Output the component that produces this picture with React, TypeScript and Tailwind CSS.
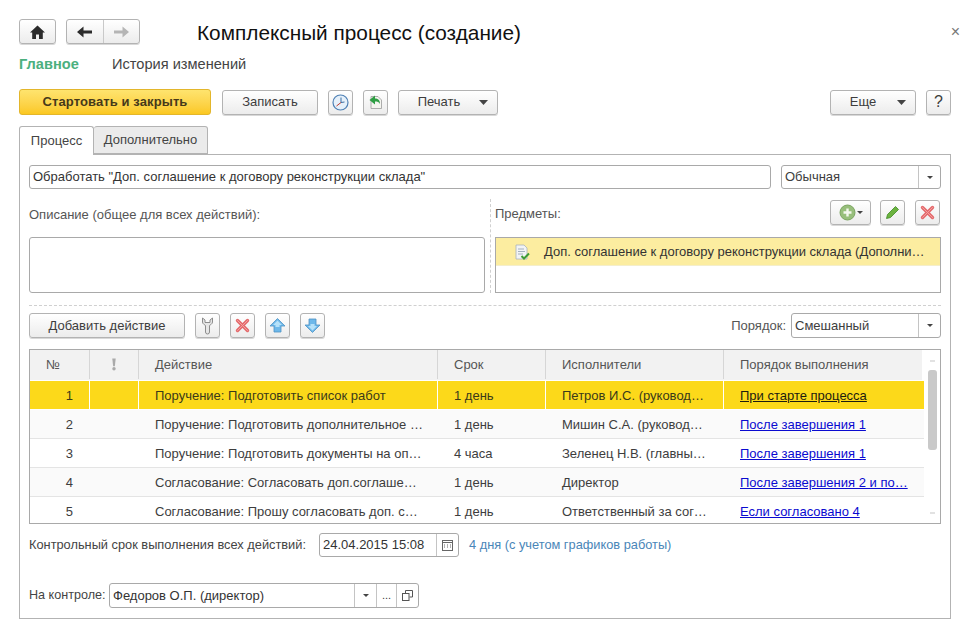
import React from "react";

const btn =
  "flex items-center justify-center h-[25px] shrink-0 rounded-[3px] border border-[#b3b3b3] bg-gradient-to-b from-[#ffffff] to-[#ececec] text-[#3d3d3d] text-[13px] shadow-[0_1px_0_#d8d8d8]";
const iconBtn = btn + " w-[25px]";

const Caret = ({ small }: { small?: boolean }) => (
  <svg width={small ? 6 : 9} height={small ? 3 : 5} viewBox="0 0 9 5" preserveAspectRatio="none" className="shrink-0">
    <path d="M0 0h9L4.500 5z" fill="#444" />
  </svg>
);

const CrossIcon = () => (
  <svg width="15" height="15" viewBox="0 0 15 15">
    <path d="M2.500 2.500l10 10M12.500 2.500l-10 10" stroke="#e46a6c" strokeWidth="3.400" strokeLinecap="round" />
    <path d="M2.500 2.500l10 10M12.500 2.500l-10 10" stroke="#f3a0a0" strokeWidth="1" strokeLinecap="round" />
  </svg>
);

const Arrow = ({ down }: { down?: boolean }) => (
  <svg width="17" height="17" viewBox="0 0 17 17" className={down ? "rotate-180" : ""}>
    <path d="M8.500 1.500L16 9h-4v6H5V9H1z" fill="#6db8ea" stroke="#4f93c4" strokeWidth="0.800" strokeLinejoin="round" />
    <path d="M8.500 3.500L13 8h-2.500v2h-4V8H4z" fill="#b5e1f9" />
  </svg>
);

const ComboBox = ({ text, width }: { text: string; width: string }) => (
  <div className={"flex items-center h-[25px] rounded-[3px] border border-[#a9a9a9] bg-white text-[13px] text-[#3d3d3d] " + width}>
    <span className="flex-1 pl-[3px] whitespace-nowrap">{text}</span>
    <span className="flex items-center justify-center w-[22px] h-full border-l border-[#c4c4c4]">
      <Caret small />
    </span>
  </div>
);

type Row = { n: string; action: string; term: string; who: string; order: string };
const rows: Row[] = [
  { n: "1", action: "Поручение: Подготовить список работ", term: "1 день", who: "Петров И.С. (руковод…", order: "При старте процесса" },
  { n: "2", action: "Поручение: Подготовить дополнительное …", term: "1 день", who: "Мишин С.А. (руковод…", order: "После завершения 1" },
  { n: "3", action: "Поручение: Подготовить документы на оп…", term: "4 часа", who: "Зеленец Н.В. (главны…", order: "После завершения 1" },
  { n: "4", action: "Согласование: Согласовать доп.соглаше…", term: "1 день", who: "Директор", order: "После завершения 2 и по…" },
  { n: "5", action: "Согласование: Прошу согласовать доп. с…", term: "1 день", who: "Ответственный за сог…", order: "Если согласовано 4" },
];

const cols = "grid grid-cols-[59px_49px_299px_108px_178px_201px]";

export default function App() {
  return (
    <div className="w-[977px] h-[633px] overflow-hidden bg-white pt-[19px] text-[#3d3d3d] font-['Liberation_Sans',Arial,sans-serif]">
      {/* Header */}
      <div className="flex items-center h-[25px] pl-[19px] pr-[17px]">
        <button className={btn + " w-[37px]"}>
          <svg width="15" height="14" viewBox="0 0 15 14">
            <path d="M7.500 0.500L15 7.500h-2.200V14H9V9.500H6V14H2.200V7.500H0z" fill="#2b2b2b" />
          </svg>
        </button>
        <div className={btn + " w-[74px] ml-[10px]"}>
          <span className="flex flex-1 items-center justify-center h-full border-r border-[#c9c9c9]">
            <svg width="15" height="12" viewBox="0 0 15 12">
              <path d="M6.500 0.500v4H15v3H6.500v4L0 6z" fill="#2b2b2b" />
            </svg>
          </span>
          <span className="flex flex-1 items-center justify-center h-full">
            <svg width="15" height="12" viewBox="0 0 15 12">
              <path d="M8.500 0.500v4H0v3h8.500v4L15 6z" fill="#b5b5b5" />
            </svg>
          </span>
        </div>
        <h1 className="ml-[57px] text-[20.8px] leading-[25px] font-normal text-[#111] whitespace-nowrap mt-[2px]">
          Комплексный процесс (создание)
        </h1>
        <span className="ml-auto text-[16px] leading-none text-[#777] mt-[1px]">×</span>
      </div>

      {/* Section links */}
      <div className="flex items-center h-[17px] mt-[12px] pl-[19px] text-[14.6px]">
        <span className="font-bold text-[#4bb07e] w-[93px]">Главное</span>
        <span className="text-[#444]">История изменений</span>
      </div>

      {/* Command bar */}
      <div className="flex items-center gap-[10px] mt-[16px] pl-[19px] pr-[26px]">
        <button className="flex items-center justify-center w-[192px] h-[26px] mr-[1px] rounded-[3px] border border-[#e3b62b] bg-gradient-to-b from-[#fee46e] to-[#fbc81f] text-[13px] font-bold text-[#46391a] tracking-[0.1px]">
          Стартовать и закрыть
        </button>
        <button className={btn + " w-[96px]"}>Записать</button>
        <button className={iconBtn}>
          <svg width="17" height="17" viewBox="0 0 17 17">
            <circle cx="8.500" cy="8.500" r="7.500" fill="#e5f0fa" stroke="#4f81b5" strokeWidth="1.200" />
            <path d="M9 3.500V8.500L12.500 8" stroke="#3b6ea3" strokeWidth="1" fill="none" />
            <path d="M9 8.500L4.500 12" stroke="#c0392b" strokeWidth="1" fill="none" />
          </svg>
        </button>
        <button className={iconBtn}>
          <svg width="16" height="16" viewBox="0 0 16 16">
            <path d="M3 2.500h7l3.500 3.500v8.500H3z" fill="#f5f5f0" stroke="#9a9a9a" strokeWidth="0.800" />
            <path d="M1.500 6L7 1.500V4.500c3 0 5 1.500 5 5.500-1-2-2.500-2.500-5-2.500v3z" fill="#2f9e44" />
          </svg>
        </button>
        <button className={btn + " w-[100px] gap-[19px] pl-[10px]"}>
          Печать
          <Caret />
        </button>
        <button className={btn + " w-[86px] ml-auto gap-[21px] pl-[10px]"}>
          Еще
          <Caret />
        </button>
        <button className={iconBtn + " text-[16px]"}>?</button>
      </div>

      {/* Tabs */}
      <div className="flex h-[29px] mt-[11px] ml-[19px] relative z-10">
        <div className="flex items-center justify-center w-[75px] h-[29px] rounded-t-[3px] border border-b-0 border-[#b3b3b3] bg-white text-[13px] text-[#444]">
          Процесс
        </div>
        <div className="flex items-center justify-center w-[114px] h-[28px] rounded-t-[3px] border border-l-0 border-[#b3b3b3] bg-[#ebebeb] text-[13px] text-[#444]">
          Дополнительно
        </div>
      </div>

      {/* Panel */}
      <div className="w-[932px] h-[465px] -mt-[1px] ml-[19px] border border-[#b3b3b3] px-[9px] pt-[10px]">
        <div className="flex gap-[10px]">
          <div className="flex items-center w-[742px] h-[24px] rounded-[3px] border border-[#a9a9a9] pl-[3px] text-[13px] text-[#333] whitespace-nowrap">
            Обработать "Доп. соглашение к договору реконструкции склада"
          </div>
          <ComboBox text="Обычная" width="w-[160px] !h-[24px]" />
        </div>

        <div className="flex mt-[10px] h-[94px]">
          <div className="flex flex-col w-[456px] shrink-0">
            <div className="h-[38px] pt-[8px] text-[13px] leading-[16px] text-[#555]">Описание (общее для всех действий):</div>
            <div className="h-[56px] rounded-[3px] border border-[#a9a9a9] bg-white" />
          </div>
          <div className="w-[10px] flex justify-center">
            <div className="h-full border-l border-dashed border-[#d0d0d0]" />
          </div>
          <div className="flex flex-col w-[446px] shrink-0">
            <div className="flex items-start h-[38px] pt-[1px] pr-[1px]">
              <span className="text-[13px] leading-[16px] mt-[6px] text-[#555]">Предметы:</span>
              <button className={btn + " w-[41px] ml-auto gap-[1px]"}>
                <svg width="17" height="17" viewBox="0 0 17 17">
                  <circle cx="8.500" cy="8.500" r="7.500" fill="#98bf7c" stroke="#7ba561" />
                  <path d="M8.500 4.500v8M4.500 8.500h8" stroke="#f4f8ef" strokeWidth="2.400" />
                </svg>
                <Caret small />
              </button>
              <button className={iconBtn + " ml-[9px]"}>
                <svg width="15" height="15" viewBox="0 0 15 15">
                  <path d="M10.500 1.500l3 3L5.500 12.500 1.500 13.500l1-4z" fill="#6cb33f" stroke="#3f8a23" strokeWidth="0.800" />
                </svg>
              </button>
              <button className={iconBtn + " ml-[10px]"}>
                <CrossIcon />
              </button>
            </div>
            <div className="h-[56px] border border-[#a9a9a9] bg-white">
              <div className="flex items-center h-[28px] bg-[#fcedA0] border-b border-[#f4eecb] text-[13px] text-[#333]">
                <svg width="16" height="16" viewBox="0 0 16 16" className="ml-[18px] shrink-0">
                  <path d="M2 1h8l3 3v11H2z" fill="#f2f4f5" stroke="#a8b2bd" strokeWidth="0.800" />
                  <path d="M4 5h6M4 7.500h7M4 10h5" stroke="#8fa0b0" strokeWidth="0.800" />
                  <path d="M7.500 12l2.500 2.500L15 9.500" stroke="#3f9c35" strokeWidth="2" fill="none" />
                </svg>
                <span className="ml-[14px] whitespace-nowrap">Доп. соглашение к договору реконструкции склада (Дополни…</span>
              </div>
            </div>
          </div>
        </div>

        <div className="mt-[12px] border-t border-dashed border-[#d0d0d0]" />

        {/* Actions toolbar */}
        <div className="flex items-center h-[25px] mt-[7px] gap-[10px]">
          <button className={btn + " w-[156px]"}>Добавить действие</button>
          <button className={iconBtn}>
            <svg width="13" height="18" viewBox="0 0 13 18">
              <path d="M1.500 1v4c0 2 2.500 3 3 3.500V15a2 2 0 0 0 4 0V8.500c.5-.5 3-1.500 3-3.500V1L9 3v2.500H4V3z" fill="#e6e6e6" stroke="#8c8c8c" strokeWidth="1" />
            </svg>
          </button>
          <button className={iconBtn}>
            <CrossIcon />
          </button>
          <button className={iconBtn}>
            <Arrow />
          </button>
          <button className={iconBtn}>
            <Arrow down />
          </button>
          <span className="ml-auto text-[13px] text-[#555] -mr-[5px]">Порядок:</span>
          <ComboBox text="Смешанный" width="w-[150px]" />
        </div>

        {/* Table */}
        <div className="relative mt-[11px] w-[912px] h-[175px] border border-[#a9a9a9] overflow-hidden text-[13px]">
          <div className={cols + " h-[31px] pb-[1px] bg-[#f2f2f2] border-b border-white text-[#555] mr-[18px]"}>
            <div className="flex items-center pl-[16px]">№</div>
            <div className="flex items-center justify-center border-l border-[#d6d6d6]">
              <svg width="6" height="15" viewBox="0 0 7 15">
                <path d="M1.500 0.500h4L4.500 9.500h-2z" fill="#aaa" />
                <circle cx="3.500" cy="12.500" r="2" fill="#aaa" />
              </svg>
            </div>
            <div className="flex items-center pl-[16px] border-l border-[#d6d6d6]">Действие</div>
            <div className="flex items-center pl-[16px] border-l border-[#d6d6d6]">Срок</div>
            <div className="flex items-center pl-[16px] border-l border-[#d6d6d6]">Исполнители</div>
            <div className="flex items-center pl-[16px] border-l border-[#d6d6d6]">Порядок выполнения</div>
          </div>
          {rows.map((r, i) => {
            const selected = i === 0;
            return (
              <div
                key={r.n}
                className={
                  cols +
                  " h-[29px] border-b mr-[16px] " +
                  (selected
                    ? "bg-[#fcd91a] border-white text-[#3a3a1a]"
                    : i % 2 === 1
                      ? "bg-[#fafafa] border-[#e4e4e4]"
                      : "bg-white border-[#e4e4e4]")
                }
              >
                <div className="flex items-center justify-end pr-[16px] pt-[1px]">{r.n}</div>
                <div className={"border-l " + (selected ? "border-white" : "border-transparent")} />
                <div className={"flex items-center pl-[16px] pt-[1px] whitespace-nowrap border-l " + (selected ? "border-white" : "border-transparent")}>{r.action}</div>
                <div className={"flex items-center pl-[16px] pt-[1px] border-l " + (selected ? "border-white" : "border-transparent")}>{r.term}</div>
                <div className={"flex items-center pl-[16px] pt-[1px] whitespace-nowrap border-l " + (selected ? "border-white" : "border-transparent")}>{r.who}</div>
                <div className={"flex items-center pl-[16px] pt-[1px] whitespace-nowrap border-l " + (selected ? "border-white" : "border-transparent")}>
                  <span className={"underline " + (selected ? "text-[#1c1c10]" : "text-[#0a0ad0]")}>{r.order}</span>
                </div>
              </div>
            );
          })}
          {/* Scrollbar overlay */}
          <div className="absolute right-0 top-0 bottom-0 w-[16px] bg-white">
            <div className="absolute left-[4px] top-[20px] w-[9px] h-[80px] rounded-[3px] bg-[#c9c9c9]" />
            <div className="absolute left-[6px] top-[10px] w-[5px] h-[2px] bg-[#e2e2e2]" />
            <div className="absolute left-[6px] bottom-[9px] w-[5px] h-[2px] bg-[#e2e2e2]" />
          </div>
        </div>

        {/* Deadline */}
        <div className="flex items-center h-[24px] mt-[9px] text-[13px]">
          <span className="text-[#444] w-[290px] text-[12.8px] whitespace-nowrap">Контрольный срок выполнения всех действий:</span>
          <div className="flex items-center w-[140px] h-full rounded-[3px] border border-[#a9a9a9]">
            <span className="flex-1 pl-[3px] text-[#333]">24.04.2015 15:08</span>
            <span className="flex items-center justify-center w-[22px] h-full border-l border-[#c4c4c4]">
              <svg width="11" height="11" viewBox="0 0 11 11">
                <rect x="0.500" y="0.500" width="10" height="10" fill="#fff" stroke="#666" />
                <path d="M0.500 2.500h10" stroke="#666" />
                <path d="M2 5h1M5 5h1M8 5h1M2 7h1M5 7h1M8 7h1" stroke="#666" />
              </svg>
            </span>
          </div>
          <span className="ml-[10px] text-[12.8px] text-[#4a86b8]">4 дня (с учетом графиков работы)</span>
        </div>

        {/* Control */}
        <div className="flex items-center h-[25px] mt-[26px] text-[13px]">
          <span className="text-[#444] w-[80px] text-[12.6px] whitespace-nowrap">На контроле:</span>
          <div className="flex items-center w-[310px] h-full rounded-[3px] border border-[#a9a9a9]">
            <span className="flex-1 pl-[3px] text-[#333]">Федоров О.П. (директор)</span>
            <span className="flex items-center justify-center w-[22px] h-full border-l border-[#c4c4c4]">
              <Caret small />
            </span>
            <span className="flex items-end justify-center w-[20px] h-full border-l border-[#c4c4c4] pb-[6px] text-[11px] leading-none">...</span>
            <span className="flex items-center justify-center w-[22px] h-full border-l border-[#c4c4c4]">
              <svg width="11" height="11" viewBox="0 0 11 11" fill="none" stroke="#555">
                <path d="M3.500 3V0.500h7v6.500H7.500" />
                <rect x="0.500" y="3.500" width="6.500" height="7" />
              </svg>
            </span>
          </div>
        </div>
      </div>
    </div>
  );
}
